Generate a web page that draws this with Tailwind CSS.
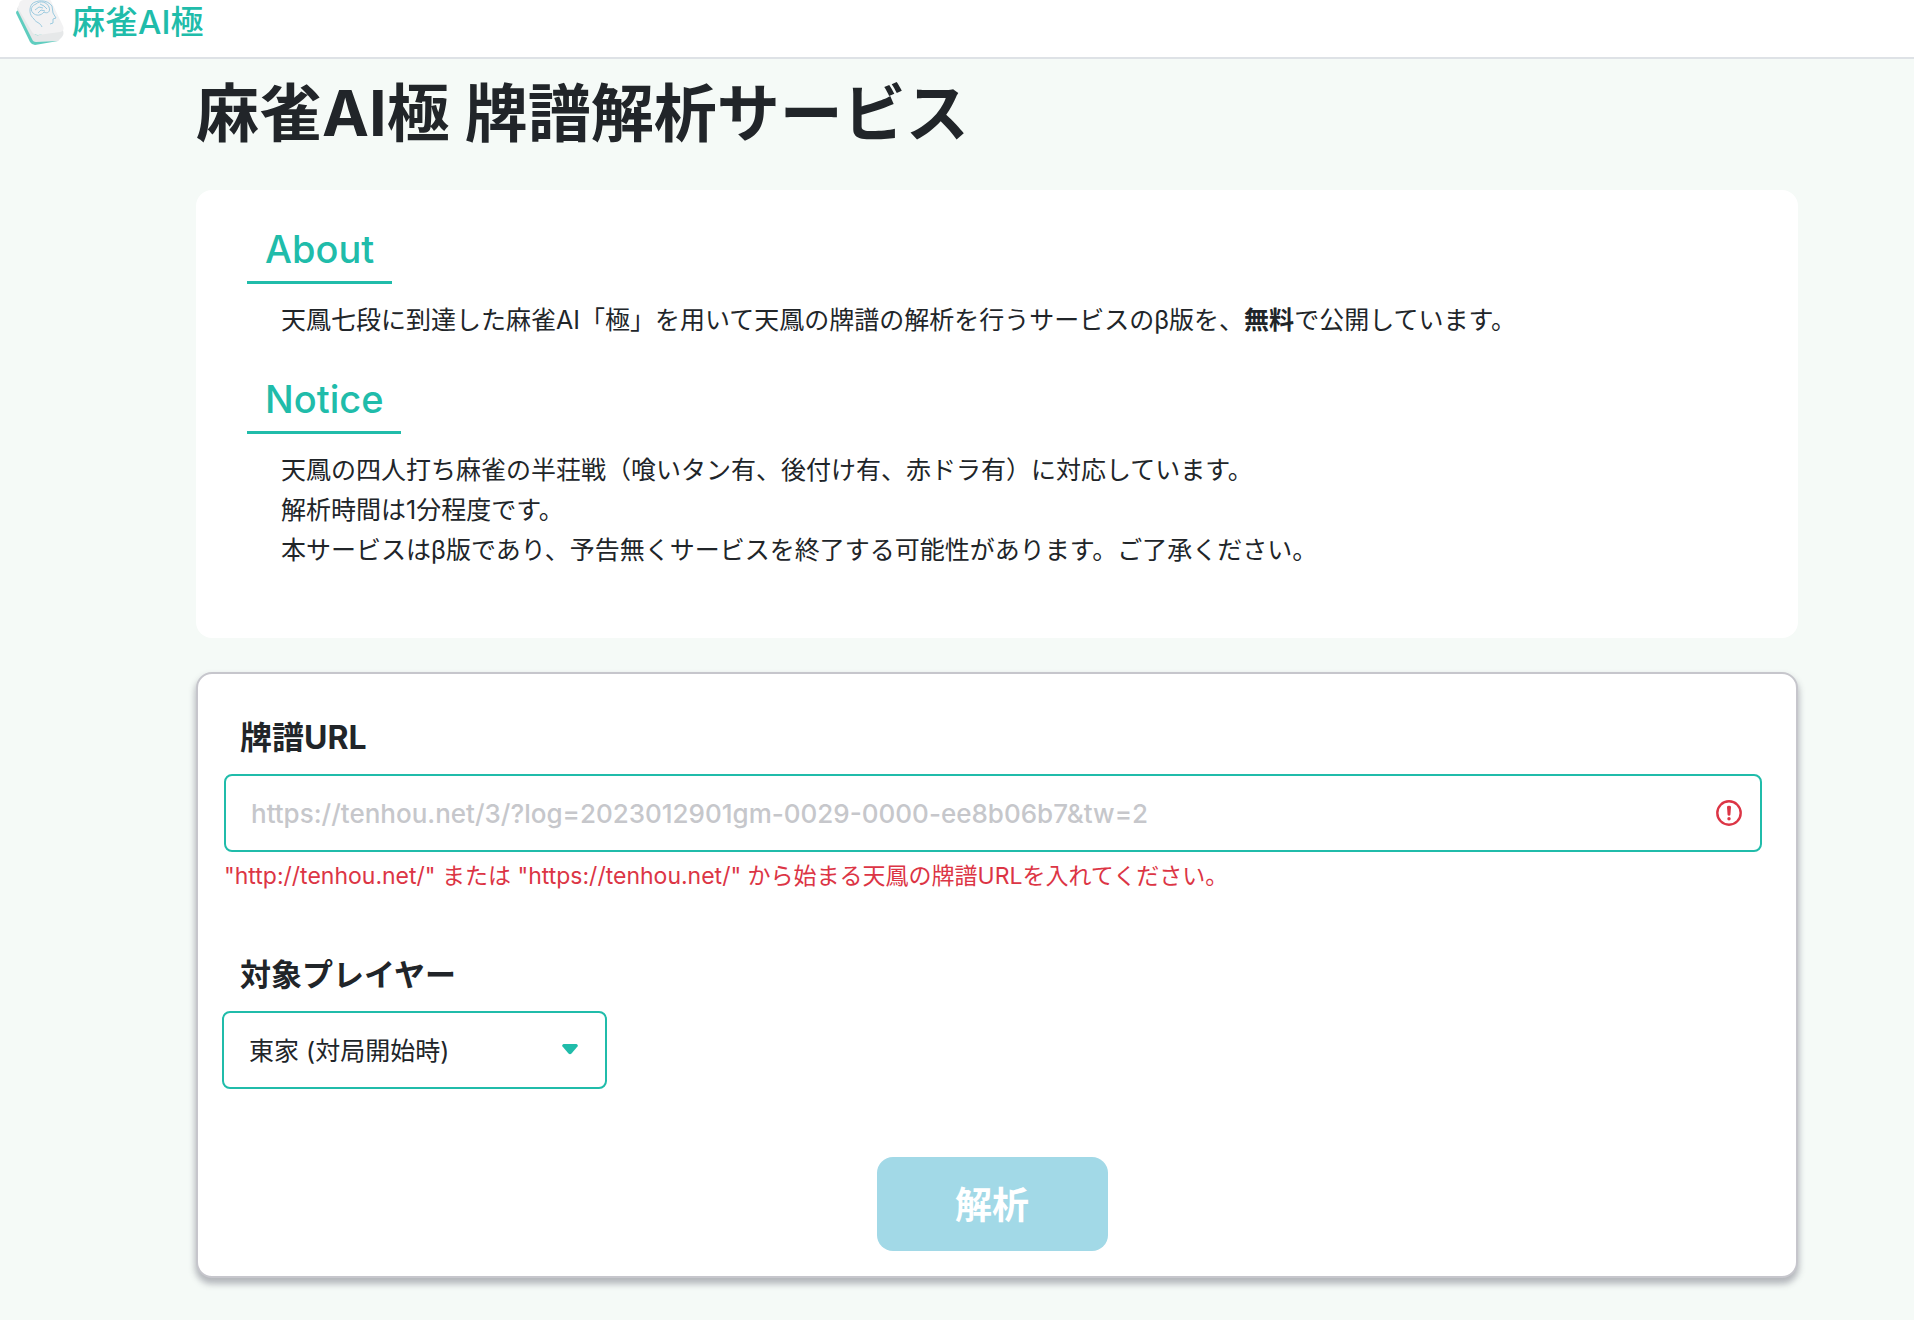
<!DOCTYPE html>
<html lang="ja">
<head>
    <meta charset="UTF-8">
    <meta name="viewport" content="width=device-width, initial-scale=1.0">
    <title>麻雀AI極 牌譜解析サービス</title>
    <script src="https://cdn.jsdelivr.net/npm/@tailwindcss/browser@4"></script>
</head>
<body class="min-h-screen bg-[#f5faf7] font-['Inter','Noto_Sans_CJK_JP',sans-serif] text-[25px] leading-[40px] text-[#212529]">
    <header class="flex h-[59px] items-start border-b-2 border-[#dee2e6] bg-white pl-4">
        <a href="#" class="flex items-start gap-2 text-[33px] leading-[45px] font-medium text-[#20bcaa]">
            <svg class="h-[45px] w-[48px]" viewBox="0 0 48 45" aria-hidden="true">
                <path d="M0 13 Q0 10 4 10 L31 34 Q44 36 42 41 L19 45 Q16 45 14 42 Z" fill="#5fcdbf"/>
                <path d="M1 9 Q2 5 7 4 L18 33 Q19 36 23 35 L46 28 Q49 34 46 37 L42 41 L20 42 Q17 42 16 39 Z" fill="#e6e8e9"/>
                <path d="M3 4 Q4 0 8 0 L30 -1 Q34 -1 35 1 L47 26 Q49 31 44 32 L22 35 Q18 35 16 32 L2 8 Z" fill="#f2f2f3"/>
                <g fill="none" stroke="#9ccbe0" stroke-width="1">
                    <path d="M26 27 C24 22 20 23 18 19 C13 15 13 8 16 4 C20 0 31 -1 36 6 L37 13 L40 18 L37 19 L37 23 L34 24"/>
                    <path d="M17 13 C13 9 17 5 20 4 C24 0 31 2 33 7 C35 12 31 14 28 12 C25 16 20 16 17 13 M19 10 L23 7 L27 8 M24 4 L28 6 L31 9 M22 13 L25 10 L29 11"/>
                </g>
            </svg>
            麻雀AI極
        </a>
    </header>

    <main class="pt-3 pr-[116px] pb-10 pl-[196px]">
        <h1 class="text-[63px] leading-[84px] font-bold">麻雀AI極 牌譜解析サービス</h1>

        <section class="mt-[35px] rounded-2xl bg-white px-[51px] pt-8 pb-[68px]">
            <h2 class="inline-block border-b-3 border-[#20bcaa] px-[18px] pb-1 text-[38px] leading-[55px] font-medium text-[#20bcaa]">About</h2>
            <p class="mt-4 px-[34px]">天鳳七段に到達した麻雀AI「極」を用いて天鳳の牌譜の解析を行うサービスのβ版を、<b>無料</b>で公開しています。</p>
            <h2 class="mt-8 inline-block border-b-3 border-[#20bcaa] px-[18px] pb-1 text-[38px] leading-[55px] font-medium text-[#20bcaa]">Notice</h2>
            <p class="mt-4 px-[34px]">
                天鳳の四人打ち麻雀の半荘戦（喰いタン有、後付け有、赤ドラ有）に対応しています。<br>
                解析時間は1分程度です。<br>
                本サービスはβ版であり、予告無くサービスを終了する可能性があります。ご了承ください。
            </p>
        </section>

        <form class="mt-[34px] rounded-2xl border-2 border-[#c6c6cc] bg-white pt-[42px] pr-[34px] pb-[25px] pl-6 shadow-[0_5px_6px_1px_rgba(60,60,80,0.35)]" novalidate>
            <label for="url" class="block px-[18px] text-[32px] leading-[44px] font-bold">牌譜URL</label>
            <div class="mt-[14px] pl-0.5">
                <div class="relative">
                    <input id="url" type="url" aria-invalid="true" aria-describedby="url-error" placeholder="https://tenhou.net/3/?log=2023012901gm-0029-0000-ee8b06b7&amp;tw=2" class="block h-[78px] w-full rounded-lg border-2 border-[#20bcaa] bg-white pr-20 pl-[25px] text-[26px] font-medium placeholder:text-[#c6c7cb]">
                    <svg class="absolute top-[26px] right-5 size-[26px]" viewBox="0 0 26 26" fill="#dc3545" aria-hidden="true">
                        <circle cx="13" cy="13" r="11.7" fill="none" stroke="#dc3545" stroke-width="2.4"/>
                        <path d="M11 7 Q11 5.8 13 5.8 Q15 5.8 15 7 L14.4 15 Q14.2 15.7 13 15.7 Q11.8 15.7 11.6 15 Z"/>
                        <circle cx="13" cy="18.8" r="1.7"/>
                    </svg>
                </div>
                <p id="url-error" class="mt-1 text-[23px] text-[#dc3545]">"http://tenhou.net/" または "https://tenhou.net/" から始まる天鳳の牌譜URLを入れてください。</p>
            </div>

            <label for="player" class="mt-[57px] block px-[18px] text-[31px] leading-[44px] font-bold">対象プレイヤー</label>
            <div class="relative mt-[14px] w-[385px]">
                <select id="player" class="block h-[78px] w-full appearance-none rounded-lg border-2 border-[#20bcaa] bg-white pt-0.5 pr-16 pl-[25px]">
                    <option>東家 (対局開始時)</option>
                    <option>南家 (対局開始時)</option>
                    <option>西家 (対局開始時)</option>
                    <option>北家 (対局開始時)</option>
                </select>
                <svg class="pointer-events-none absolute top-[33px] right-[29px] h-[11px] w-4" viewBox="0 0 16 11" fill="#20bcaa" aria-hidden="true">
                    <path d="M1.5 0 H14.5 Q16.5 1 15.5 2.5 L9.5 9.5 Q8 11 6.5 9.5 L0.5 2.5 Q-0.5 1 1.5 0 Z"/>
                </svg>
            </div>

            <button type="submit" disabled class="mx-auto mt-[68px] block h-[94px] w-[231px] rounded-2xl bg-[#a2d9e7] pt-1 text-[37px] font-bold text-white">解析</button>
        </form>
    </main>
</body>
</html>
